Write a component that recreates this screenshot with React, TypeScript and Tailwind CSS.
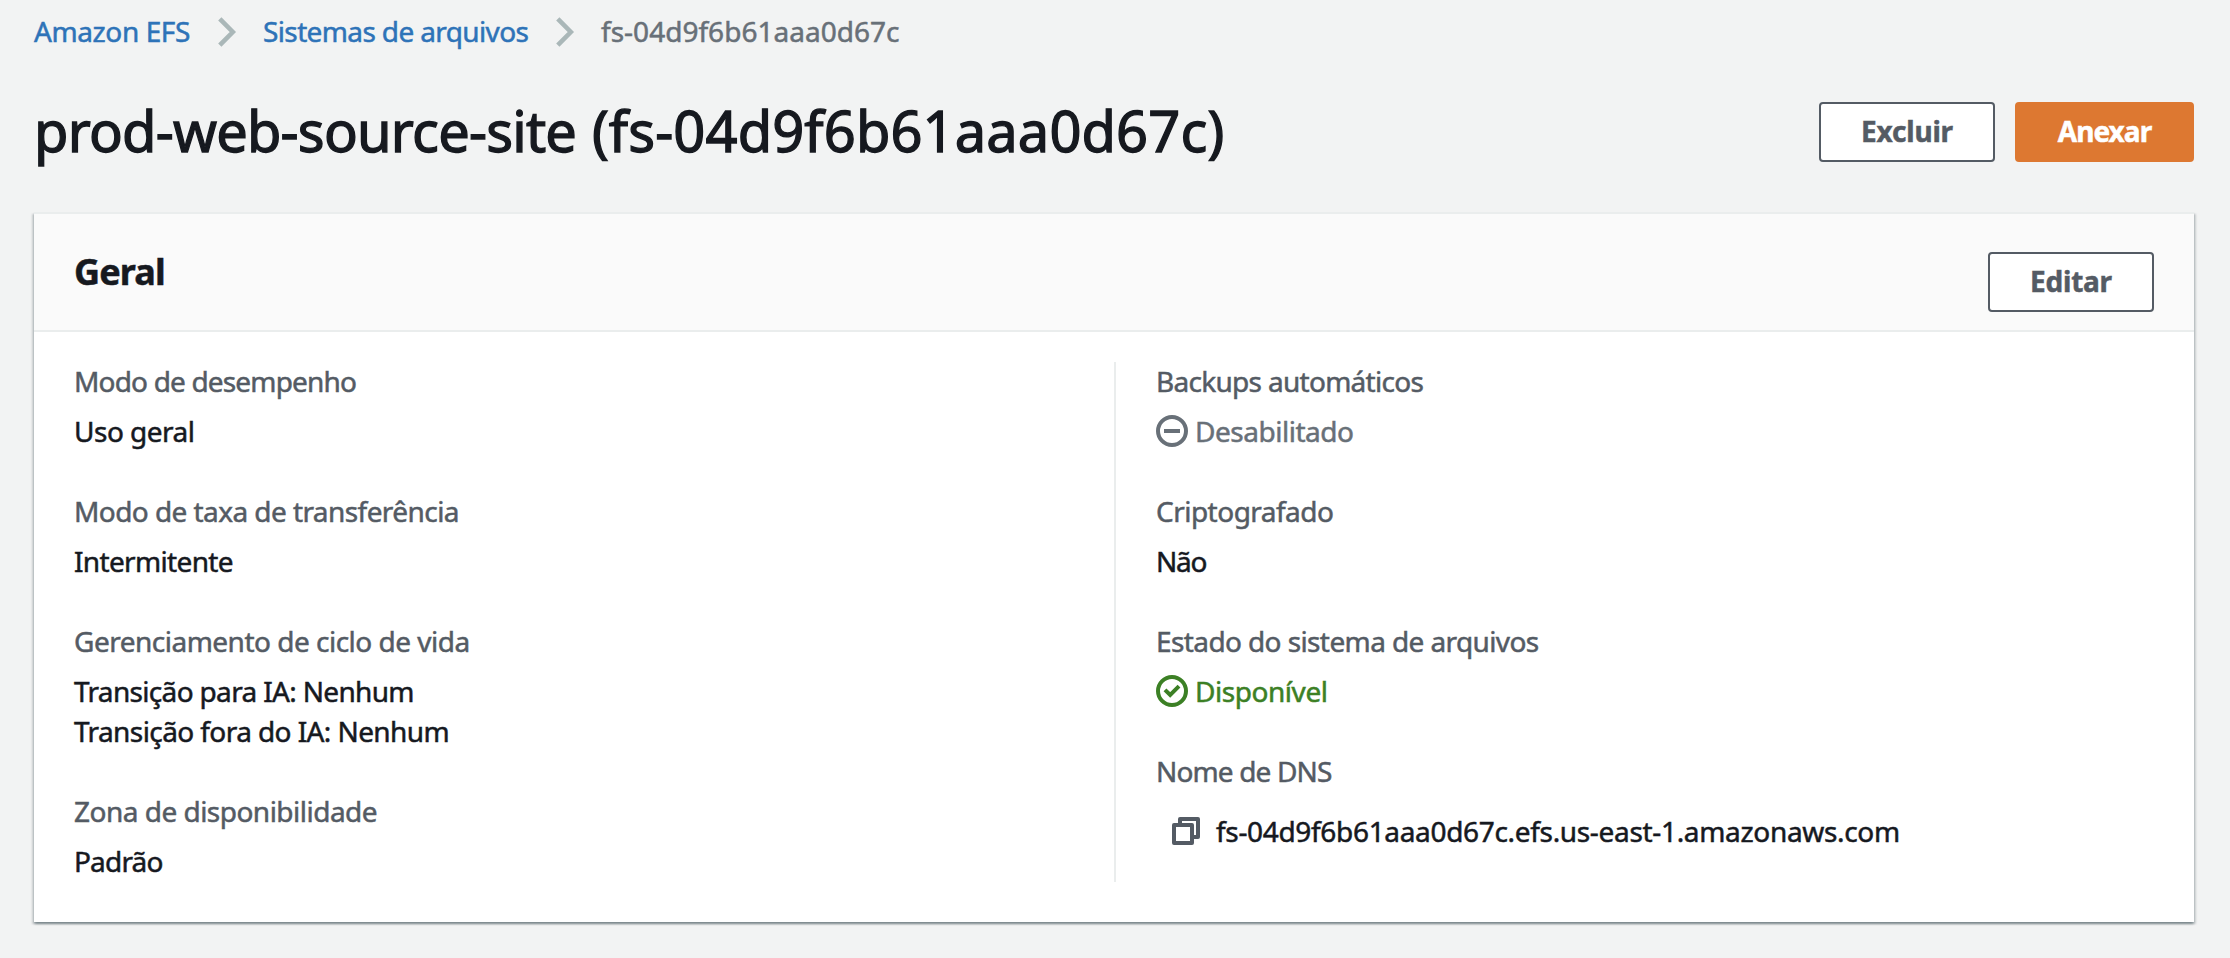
import type { ReactNode } from "react";

function Chevron() {
  return (
    <svg className="h-8 w-5 shrink-0" viewBox="0 0 20 32" fill="none" stroke="#aab7b8" strokeWidth="4.6">
      <path d="M2.8 3.8 L15.8 17 L2.8 30.2" />
    </svg>
  );
}

function DisabledIcon() {
  return (
    <svg className="size-8 shrink-0" viewBox="0 0 32 32" fill="none" stroke="currentColor" strokeWidth="4">
      <circle cx="16" cy="16" r="14" />
      <path d="M8 16 H24" />
    </svg>
  );
}

function AvailableIcon() {
  return (
    <svg className="size-8 shrink-0" viewBox="0 0 32 32" fill="none" stroke="currentColor" strokeWidth="4">
      <circle cx="16" cy="16" r="14" />
      <path d="M9 14.8 L14.2 20 L23 11.2" />
    </svg>
  );
}

function CopyIcon() {
  return (
    <svg
      className="size-7 shrink-0"
      viewBox="0 0 28 28"
      fill="none"
      stroke="#545b64"
      strokeWidth="4"
      strokeLinejoin="round"
    >
      <path d="M8 6 V2 H26 V20 H22" />
      <path d="M2 8 H20 V26 H2 Z" />
    </svg>
  );
}

function Button({ children, className }: { children: ReactNode; className: string }) {
  return (
    <button className={`h-[60px] rounded-[4px] border-2 pb-0.5 font-bold leading-10 ${className}`}>{children}</button>
  );
}

function Field({ label, tracking, children }: { label: string; tracking: string; children: ReactNode }) {
  return (
    <div className="flex flex-col gap-2.5">
      <div className={`text-[#545b64] ${tracking}`}>{label}</div>
      {children}
    </div>
  );
}

export default function App() {
  return (
    <div className="h-[958px] w-[2230px] overflow-hidden whitespace-nowrap bg-[#f2f3f3] pl-[34px] pr-9 pt-[11px] font-['Noto_Sans',sans-serif] text-[28px] leading-10 text-[#16191f] [-webkit-text-stroke:0.5px_currentColor]">
      <nav className="flex h-10 items-center">
        <a className="w-[183px] tracking-[-0.396px] text-[#2e73b8]">Amazon EFS</a>
        <Chevron />
        <a className="ml-[26px] w-[292px] tracking-[-0.627px] text-[#2e73b8]">Sistemas de arquivos</a>
        <Chevron />
        <span className="ml-[26px] tracking-[0.02px] text-[#687078]">fs-04d9f6b61aaa0d67c</span>
      </nav>

      <header className="mt-[39px] flex h-20 items-start justify-between">
        <h1 className="text-[56px] leading-[80px] tracking-[-0.78px] [-webkit-text-stroke:1.3px_currentColor]">
          prod-web-source-site <span className="ml-0.5 tracking-[0.12px]">(fs-04d9f6b61aaa0d67c)</span>
        </h1>
        <div className="flex gap-5 pt-3">
          <Button className="w-44 border-[#545b64] bg-white tracking-[-0.195px] text-[#545b64]">Excluir</Button>
          <Button className="w-[179px] border-[#dd7831] bg-[#dd7831] tracking-[-0.938px] text-white">Anexar</Button>
        </div>
      </header>

      <section className="mt-[42px] h-[710px] border-t-2 border-[#eaeded] bg-white shadow-[0_2px_2px_0_rgba(0,28,36,0.3),2px_2px_2px_0_rgba(0,28,36,0.15),-2px_2px_2px_0_rgba(0,28,36,0.15)]">
        <div className="flex h-[118px] items-start justify-between border-b-2 border-[#eaeded] bg-[#fafafa] pl-10 pr-10">
          <h2 className="mt-9 text-[36px] font-bold leading-[44px] tracking-[-0.873px]">Geral</h2>
          <Button className="mt-[38px] w-[166px] border-[#545b64] bg-white tracking-[-0.234px] text-[#545b64]">
            Editar
          </Button>
        </div>

        <div className="grid h-[550px] grid-cols-[1080px_1fr] pt-[30px]">
          <div className="-mt-px flex flex-col gap-10 pl-10">
            <Field label="Modo de desempenho" tracking="tracking-[-0.829px]">
              <div className="tracking-[-0.5px]">Uso geral</div>
            </Field>
            <Field label="Modo de taxa de transferência" tracking="tracking-[-0.568px]">
              <div className="tracking-[-0.652px]">Intermitente</div>
            </Field>
            <Field label="Gerenciamento de ciclo de vida" tracking="tracking-[-0.502px]">
              <div>
                <div className="tracking-[-0.665px]">Transição para IA: Nenhum</div>
                <div className="tracking-[-0.587px]">Transição fora do IA: Nenhum</div>
              </div>
            </Field>
            <Field label="Zona de disponibilidade" tracking="tracking-[-0.515px]">
              <div className="tracking-[-0.816px]">Padrão</div>
            </Field>
          </div>

          <div className="border-l-2 border-[#eaeded] pl-10">
            <div className="-mt-px flex flex-col gap-10">
              <Field label="Backups automáticos" tracking="tracking-[-0.704px]">
                <div className="flex items-center gap-[7px] tracking-[-0.48px] text-[#687078]">
                  <DisabledIcon />
                  Desabilitado
                </div>
              </Field>
              <Field label="Criptografado" tracking="tracking-[-0.52px]">
                <div className="tracking-[-1.244px]">Não</div>
              </Field>
              <Field label="Estado do sistema de arquivos" tracking="tracking-[-0.604px]">
                <div className="flex items-center gap-[7px] tracking-[-0.45px] text-[#3c8025]">
                  <AvailableIcon />
                  Disponível
                </div>
              </Field>
              <Field label="Nome de DNS" tracking="tracking-[-0.848px]">
                <div className="mt-2.5 flex items-center gap-4 pl-4 tracking-[-0.324px]">
                  <CopyIcon />
                  fs-04d9f6b61aaa0d67c.efs.us-east-1.amazonaws.com
                </div>
              </Field>
            </div>
          </div>
        </div>
      </section>
    </div>
  );
}
